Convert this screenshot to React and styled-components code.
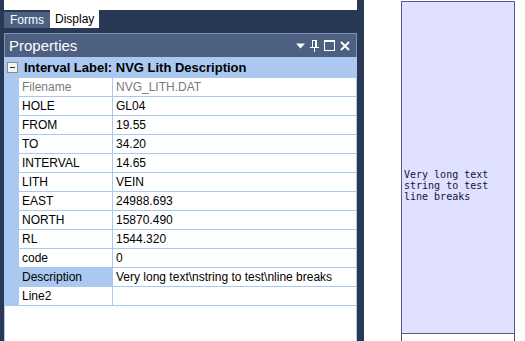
import React from 'react';
import styled, { createGlobalStyle } from 'styled-components';

const GlobalStyle = createGlobalStyle`
  html, body {
    margin: 0;
    padding: 0;
    background: #ffffff;
  }
  body {
    font-family: "Liberation Sans", Arial, sans-serif;
    font-size: 12px;
  }
`;

const Page = styled.div`
  display: flex;
  width: 525px;
  height: 341px;
  overflow: hidden;
`;

const DockPane = styled.div`
  width: 364px;
  flex: none;
  background: #293955;
  padding: 0 7px 0 4px;
  box-sizing: border-box;
  display: flex;
  flex-direction: column;
`;

const TopDoc = styled.div`
  height: 10px;
  background: #ffffff;
  flex: none;
`;

const TabStrip = styled.div`
  display: flex;
  align-items: flex-end;
  height: 18px;
  flex: none;
`;

const Tab = styled.div`
  height: ${(p) => (p.active ? '18px' : '16px')};
  padding: 0 ${(p) => (p.active ? '5px' : '6px')};
  display: flex;
  align-items: center;
  color: ${(p) => (p.active ? '#000000' : '#ffffff')};
  background: ${(p) => (p.active ? '#ffffff' : '#4d6082')};
  font-size: 12px;
  box-sizing: border-box;
`;

const Panel = styled.div`
  margin-top: 5px;
  flex: 1;
  display: flex;
  flex-direction: column;
  min-height: 0;
`;

const PanelHeader = styled.div`
  height: 24px;
  flex: none;
  background: #4d6082;
  border: 1px solid #8392b4;
  border-bottom: none;
  box-sizing: border-box;
  display: flex;
  align-items: center;
  padding: 0 6px 0 4px;
  color: #ffffff;
`;

const PanelTitle = styled.div`
  flex: 1;
  font-size: 15px;
  line-height: 20px;
`;

const HeaderTools = styled.div`
  display: flex;
  align-items: center;
  gap: 5px;
`;

const Grid = styled.div`
  flex: 1;
  background: #ffffff;
  border-left: 1px solid #abc8f0;
  border-right: 1px solid #abc8f0;
  display: flex;
  flex-direction: column;
`;

const CategoryRow = styled.div`
  height: 21px;
  background: #abc8f0;
  display: flex;
  align-items: center;
  font-weight: 700;
  font-size: 13px;
  color: #000000;
  flex: none;
`;

const Expander = styled.div`
  width: 9px;
  height: 9px;
  border: 1px solid #8a8a8a;
  background: #f4f4f4;
  margin: 0 6px 0 2px;
  display: flex;
  align-items: center;
  justify-content: center;
  &::after {
    content: '';
    width: 5px;
    height: 1px;
    background: #333333;
  }
`;

const Row = styled.div`
  display: grid;
  grid-template-columns: 14px 93px 1fr;
  height: 19px;
  flex: none;
`;

const Margin = styled.div`
  background: #abc8f0;
`;

const Cell = styled.div`
  border-bottom: 1px solid #abc8f0;
  border-left: ${(p) => (p.value ? '1px solid #abc8f0' : 'none')};
  background: ${(p) => (p.selected ? '#abc8f0' : '#ffffff')};
  color: ${(p) => (p.dim ? '#7a7a7a' : '#000000')};
  padding-left: 3px;
  line-height: 18px;
  white-space: nowrap;
  overflow: hidden;
`;

const Canvas = styled.div`
  flex: 1;
  background: #ffffff;
  padding-left: 37px;
  display: flex;
  flex-direction: column;
`;

const LabelBox = styled.div`
  width: 114px;
  height: 333px;
  margin-top: 1px;
  box-sizing: border-box;
  border: 1px solid #5a5a8c;
  background: #e0e0ff;
  padding: 167px 0 0 2px;
  flex: none;
`;

const LabelText = styled.div`
  font-family: "DejaVu Sans Mono", "Liberation Mono", monospace;
  font-size: 10px;
  line-height: 11px;
  color: #14143c;
  white-space: pre;
`;

const NextBox = styled.div`
  width: 114px;
  flex: 1;
  box-sizing: border-box;
  border-left: 1px solid #555555;
  border-right: 1px solid #555555;
`;

const rows = [
  ['Filename', 'NVG_LITH.DAT', 'dim'],
  ['HOLE', 'GL04'],
  ['FROM', '19.55'],
  ['TO', '34.20'],
  ['INTERVAL', '14.65'],
  ['LITH', 'VEIN'],
  ['EAST', '24988.693'],
  ['NORTH', '15870.490'],
  ['RL', '1544.320'],
  ['code', '0'],
  ['Description', 'Very long text\\nstring to test\\nline breaks', 'selected'],
  ['Line2', ''],
];

const ToolIcons = () => (
  <HeaderTools>
    <svg width="9" height="6" viewBox="0 0 9 6">
      <path d="M0 0.5h9L4.5 5.5z" fill="#fff" />
    </svg>
    <svg width="9" height="12" viewBox="0 0 9 12">
      <path d="M2 0.5h5M2.5 0.5v7M6.5 0.5v7M5.5 0.5v7M0 7.5h9M4.5 7.5v4.5" stroke="#fff" strokeWidth="1" fill="none" />
    </svg>
    <svg width="11" height="11" viewBox="0 0 11 11">
      <rect x="0.5" y="0.5" width="10" height="10" stroke="#fff" strokeWidth="1" fill="none" />
      <path d="M0.5 1.5h10" stroke="#fff" />
    </svg>
    <svg width="10" height="10" viewBox="0 0 10 10">
      <path d="M1 1L9 9M9 1L1 9" stroke="#fff" strokeWidth="2" />
    </svg>
  </HeaderTools>
);

export default function App() {
  return (
    <>
      <GlobalStyle />
      <Page>
        <DockPane>
          <TopDoc />
          <TabStrip>
            <Tab>Forms</Tab>
            <Tab active>Display</Tab>
          </TabStrip>
          <Panel>
            <PanelHeader>
              <PanelTitle>Properties</PanelTitle>
              <ToolIcons />
            </PanelHeader>
            <Grid>
              <CategoryRow>
                <Expander />
                Interval Label: NVG Lith Description
              </CategoryRow>
              {rows.map(([name, value, flag]) => (
                <Row key={name}>
                  <Margin />
                  <Cell dim={flag === 'dim'} selected={flag === 'selected'}>
                    {name}
                  </Cell>
                  <Cell value dim={flag === 'dim'}>
                    {value}
                  </Cell>
                </Row>
              ))}
            </Grid>
          </Panel>
        </DockPane>
        <Canvas>
          <LabelBox>
            <LabelText>{'Very long text\nstring to test\nline breaks'}</LabelText>
          </LabelBox>
          <NextBox />
        </Canvas>
      </Page>
    </>
  );
}
